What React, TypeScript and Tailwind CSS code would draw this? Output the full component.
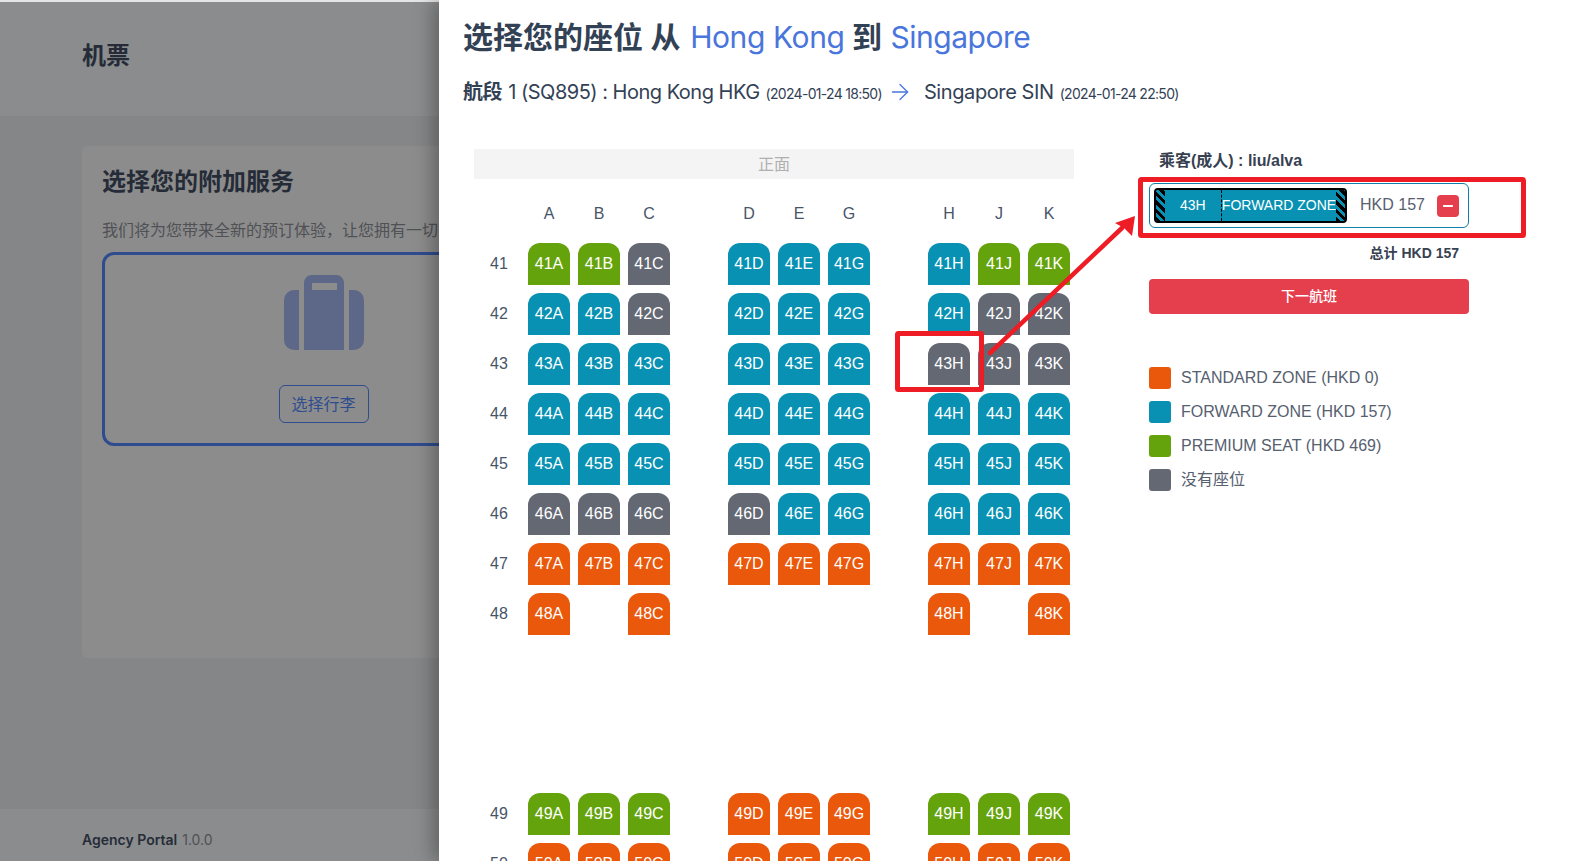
import { ArrowRight, Minus } from 'lucide-react';

const columns = ['A', 'B', 'C', '', 'D', 'E', 'G', '', 'H', 'J', 'K'];

type SeatType = 'b' | 'g' | 'x' | 'o' | '';

// each row: A B C | D E G | H J K
const rows: { row: number; seats: string; gapBefore?: boolean }[] = [
  { row: 41, seats: 'ggx bbb bgg' },
  { row: 42, seats: 'bbx bbb bxx' },
  { row: 43, seats: 'bbb bbb xxx' },
  { row: 44, seats: 'bbb bbb bbb' },
  { row: 45, seats: 'bbb bbb bbb' },
  { row: 46, seats: 'xxx xbb bbb' },
  { row: 47, seats: 'ooo ooo ooo' },
  { row: 48, seats: 'o-o --- o-o' },
  { row: 49, seats: 'ggg ooo ggg', gapBefore: true },
  { row: 50, seats: 'ooo ooo ooo' },
];

const seatColors: Record<string, string> = {
  b: 'bg-[#0891b2]',
  g: 'bg-[#65a30d]',
  x: 'bg-[#636873]',
  o: 'bg-[#ea580c]',
};

const legend = [
  { color: 'bg-[#ea580c]', label: 'STANDARD ZONE (HKD 0)' },
  { color: 'bg-[#0891b2]', label: 'FORWARD ZONE (HKD 157)' },
  { color: 'bg-[#65a30d]', label: 'PREMIUM SEAT (HKD 469)' },
  { color: 'bg-[#636873]', label: '没有座位' },
];

const sans = "font-['Inter','Noto_Sans_CJK_SC',sans-serif]";
const arial = "font-['Liberation_Sans','Noto_Sans_CJK_SC',sans-serif]";

function Seat({ label, type }: { label: string; type: SeatType }) {
  return (
    <div
      className={`${seatColors[type]} flex h-[42px] w-[42px] items-center justify-center rounded-t-xl text-base text-white ${arial}`}
    >
      {label}
    </div>
  );
}

function SeatMap() {
  return (
    <div className="w-[600px]">
      <div className="flex h-[30px] items-center justify-center bg-[#f4f4f4] text-base text-[#b0b0b0]">正面</div>
      <div className="mt-5 flex h-[30px] items-center gap-2 pl-[54px]">
        {columns.map((c, i) => (
          <div key={i} className={`w-[42px] text-center text-base text-[#475569] ${arial}`}>
            {c}
          </div>
        ))}
      </div>
      <div className="mt-[14px] flex flex-col gap-2">
        {rows.map((r) => {
          const seats = r.seats.replace(/ /g, '');
          return (
            <div key={r.row} className={`flex items-center ${r.gapBefore ? 'mt-[150px]' : ''}`}>
              <div className={`w-[50px] text-center text-base text-[#475569] ${arial}`}>{r.row}</div>
              <div className="ml-1 flex gap-2">
                {columns.map((c, i) => {
                  if (!c) return <div key={i} className="h-[42px] w-[42px]" />;
                  const idx = columns.slice(0, i).filter(Boolean).length;
                  const t = seats[idx];
                  if (t === '-') return <div key={i} className="h-[42px] w-[42px]" />;
                  return <Seat key={i} label={`${r.row}${c}`} type={t as SeatType} />;
                })}
              </div>
            </div>
          );
        })}
      </div>
    </div>
  );
}

function Stripes() {
  return (
    <div className="h-full w-[9px] bg-[repeating-linear-gradient(45deg,#000_0px,#000_3px,#0891b2_3px,#0891b2_6px)]" />
  );
}

function PassengerPanel() {
  return (
    <div className="w-[320px]">
      <div className={`pl-[10px] text-base font-semibold text-[#374151] ${arial}`}>乘客(成人) : liu/alva</div>
      <div className="mt-[10px] flex h-[45px] items-center rounded-md border border-[#0e7fa8] pl-1">
        <div className="flex h-[35px] w-[193px] items-center overflow-hidden rounded-[4px] border-2 border-black bg-[#0891b2] text-sm text-white">
          <Stripes />
          <div className={`flex h-full w-[58px] items-center justify-center border-r border-dashed border-black pb-[2px] ${arial}`}>
            43H
          </div>
          <div className={`flex-1 pb-[2px] text-center whitespace-nowrap ${arial}`}>FORWARD ZONE</div>
          <Stripes />
        </div>
        <div className={`ml-[13px] pb-[2px] text-base text-[#56606f] ${arial}`}>HKD 157</div>
        <div className="ml-[12px] flex h-[22px] w-[22px] items-center justify-center rounded bg-[#e53e4d]">
          <Minus className="h-[14px] w-[14px] text-white" strokeWidth={3.5} />
        </div>
      </div>
      <div className={`mt-[15px] pr-[10px] text-right text-sm font-bold text-[#374151] ${arial}`}>总计 HKD 157</div>
      <div className="mt-[16px] flex h-[35px] items-center justify-center rounded bg-[#e53e4d] pb-[2px] text-sm font-medium text-white">
        下一航班
      </div>
      <div className="mt-[53px] flex flex-col gap-3">
        {legend.map((l) => (
          <div key={l.label} className="flex h-[22px] items-center">
            <div className={`${l.color} h-[22px] w-[22px] rounded-[3px]`} />
            <div className={`ml-[10px] text-base text-[#56606f] ${arial}`}>{l.label}</div>
          </div>
        ))}
      </div>
    </div>
  );
}

function SuitcaseIcon() {
  return (
    <svg width="80" height="75" viewBox="0 0 80 75" fill="#5d6888">
      <path d="M15 15H10A10 10 0 0 0 0 25V65A10 10 0 0 0 10 75H15Z" />
      <path d="M65 15H70A10 10 0 0 1 80 25V65A10 10 0 0 1 70 75H65Z" />
      <path
        fillRule="evenodd"
        d="M28 0H52A8 8 0 0 1 60 8V75H20V8A8 8 0 0 1 28 0ZM28 8V15H53V8Z"
      />
    </svg>
  );
}

function BackgroundPage() {
  return (
    <div className={`flex h-[859px] flex-col bg-[#858687] ${sans}`}>
      <div className="flex h-[114px] items-center bg-[#8b8c8d] px-[82px] pb-[6px]">
        <h1 className="text-2xl font-bold text-[#252c38]">机票</h1>
      </div>
      <div className="flex-1 px-[82px] pt-[30px]">
        <div className="h-[512px] w-[900px] rounded-md bg-[#8c8c8c] p-5">
          <h2 className="text-2xl font-bold text-[#252c38]">选择您的附加服务</h2>
          <p className="mt-5 text-base text-[#4f5155]">我们将为您带来全新的预订体验，让您拥有一切</p>
          <div className="mt-[10px] flex h-[194px] w-[443px] flex-col items-center rounded-xl border-[3px] border-[#2f4c8f] pt-[20px]">
            <SuitcaseIcon />
            <div className="mt-[35px] flex h-[38px] w-[90px] items-center justify-center rounded-md border border-[#2f4c8f] text-base text-[#2f4c8f]">
              选择行李
            </div>
          </div>
        </div>
      </div>
      <div className="flex h-[52px] items-center bg-[#8b8c8d] px-[82px] pt-[9px] text-sm text-[#4f5155]">
        <span className="font-semibold text-[#252c38]">Agency Portal</span>
        <span className="ml-[5px]">1.0.0</span>
      </div>
    </div>
  );
}

function Annotations() {
  return (
    <svg className="pointer-events-none absolute inset-0" width="1571" height="861" fill="none">
      <rect x="897.5" y="333.5" width="84" height="56" stroke="#ee1c25" strokeWidth="5" rx="1" />
      <rect x="1140.5" y="179.5" width="383" height="56" stroke="#ee1c25" strokeWidth="5" rx="1" />
      <line x1="990" y1="353" x2="1122" y2="228" stroke="#ee1c25" strokeWidth="4.5" strokeLinecap="round" />
      <polygon points="1135,216 1132,236 1124,228 1115,223" fill="#ee1c25" />
    </svg>
  );
}

export default function App() {
  return (
    <div className={`relative h-[861px] w-[1571px] overflow-hidden bg-[#e5e5e5] pt-[2px] ${sans}`}>
      <BackgroundPage />
      {/* seat drawer */}
      <div className="absolute top-0 right-0 bottom-0 left-[439px] overflow-hidden bg-white pl-6 shadow-[-6px_0_18px_rgba(0,0,0,0.3)]">
        <h1 className="mt-[19px] text-3xl font-semibold text-[#334155]">
          选择您的座位 从 <span className="ml-[2px] font-normal tracking-[-0.4px] text-[#4a75dc]">Hong Kong</span> 到{' '}
          <span className="ml-[1px] font-normal tracking-[-0.5px] text-[#4a75dc]">Singapore</span>
        </h1>
        <div className="mt-[23px] flex items-center whitespace-nowrap text-xl tracking-[-0.4px] text-[#334155]">
          <span className="font-semibold">航段</span>
          <span className="ml-[6px] tracking-[-0.5px]">1 (SQ895) : Hong Kong HKG</span>
          <span className="mt-1 ml-[6px] text-sm tracking-[-0.7px]">(2024-01-24 18:50)</span>
          <ArrowRight className="mr-[11px] ml-[5px] h-[26px] w-[26px] text-[#4a75dc]" strokeWidth={1.2} />
          <span>Singapore SIN</span>
          <span className="mt-1 ml-[6px] text-sm tracking-[-0.7px]">(2024-01-24 22:50)</span>
        </div>
        <div className="mt-[43px] flex items-start pl-[11px]">
          <SeatMap />
          <div className="ml-[75px]">
            <PassengerPanel />
          </div>
        </div>
      </div>
      <Annotations />
    </div>
  );
}
